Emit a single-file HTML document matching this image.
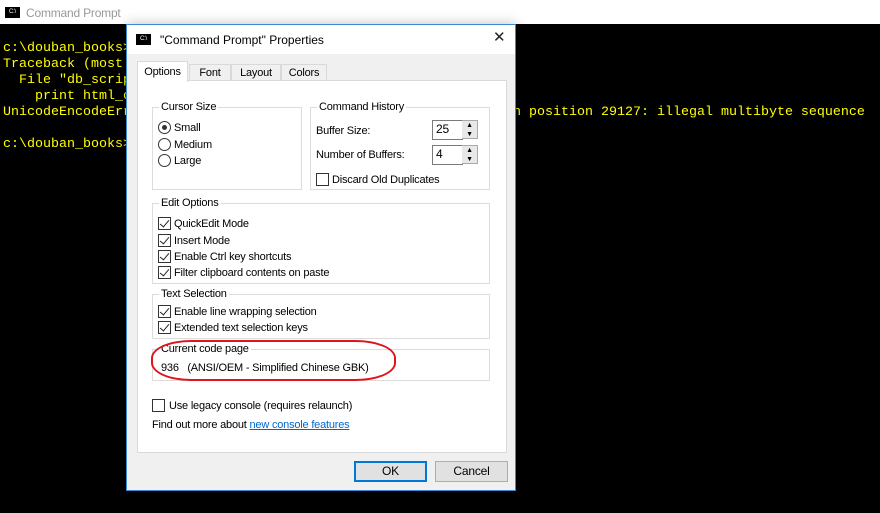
<!DOCTYPE html>
<html><head><style>
*{margin:0;padding:0;box-sizing:border-box}
body{width:880px;height:513px;overflow:hidden;background:#000;position:relative;font-family:"Liberation Sans",sans-serif;font-size:11px;letter-spacing:-0.2px;color:#000}
.a{position:absolute}
.con{font-family:"Liberation Mono",monospace;font-size:13.33px;color:#ff0;white-space:pre;line-height:16px;letter-spacing:0}
.grp{position:absolute;border:1px solid #dcdcdc}
.gl{position:absolute;background:#fff;padding:0 2px;top:-8px;left:6px;line-height:14px}
.cb{position:absolute;width:13px;height:13px;border:1px solid #333;background:#fff}
.cb.k::after{content:"";position:absolute;left:3px;top:0px;width:4px;height:8px;border:solid #222;border-width:0 1.5px 1.5px 0;transform:rotate(40deg)}
.rd{position:absolute;width:13px;height:13px;border:1px solid #333;border-radius:50%;background:#fff}
.t{position:absolute;line-height:14px;white-space:nowrap}
.tab{position:absolute;border:1px solid #d9d9d9;border-bottom:none;background:#f0f0f0;text-align:center;line-height:16px}
.btn{position:absolute;background:#e1e1e1;border:1px solid #adadad;text-align:center;line-height:18px;font-size:12px}
.spin{position:absolute;width:16px;height:19px;border:1px solid #aaa;border-left:none;background:#e8e8e8}
.inp{position:absolute;border:1px solid #7a7a7a;background:#fff;padding-left:3px;line-height:17px;font-size:12px}
</style></head><body>
<div class="a" style="left:0;top:0;width:880px;height:24px;background:#fff"></div>
<div class="a" style="left:5px;top:7px;width:15px;height:11px;background:#000;color:#fff;font-size:6px;line-height:11px;text-align:center">C:\</div>
<div class="t" style="left:26px;top:6px;font-size:12px;color:#999">Command Prompt</div>
<div class="con a" style="left:3px;top:41px">c:\douban_books&gt;
Traceback (most
  File "db_scrip
    print html_c
UnicodeEncodeErr

c:\douban_books&gt;</div>
<div class="con a" style="left:513px;top:105px">n position 29127: illegal multibyte sequence</div>

<div class="a" style="left:126px;top:24px;width:390px;height:467px;background:#f0f0f0;border:1px solid #3c8ad6;box-shadow:0 0 12px rgba(0,0,0,.25)">
<div class="a" style="left:0;top:0;width:388px;height:29px;background:#fff"></div>
<div class="a" style="left:9px;top:9px;width:15px;height:11px;background:#000;color:#fff;font-size:6px;line-height:11px;text-align:center">C:\</div>
<div class="t" style="left:33px;top:8px;font-size:12px;letter-spacing:0">"Command Prompt" Properties</div>
<div class="t" style="left:366px;top:6px;font-size:15px;color:#222">✕</div>

<div class="tab" style="left:62px;top:39px;width:42px;height:18px">Font</div>
<div class="tab" style="left:104px;top:39px;width:50px;height:18px">Layout</div>
<div class="tab" style="left:154px;top:39px;width:46px;height:18px">Colors</div>
<div class="a" style="left:10px;top:55px;width:370px;height:373px;background:#fff;border:1px solid #d9d9d9"></div>
<div class="tab" style="left:10px;top:36px;width:51px;height:21px;background:#fff;line-height:20px">Options</div>
</div>

<div class="grp" style="left:152px;top:107px;width:150px;height:83px"><span class="gl">Cursor Size</span></div>
<div class="rd" style="left:158px;top:121px"><div class="a" style="left:3px;top:3px;width:5px;height:5px;border-radius:50%;background:#333"></div></div>
<div class="t" style="left:174px;top:121px">Small</div>
<div class="rd" style="left:158px;top:138px"></div><div class="t" style="left:174px;top:138px">Medium</div>
<div class="rd" style="left:158px;top:154px"></div><div class="t" style="left:174px;top:154px">Large</div>

<div class="grp" style="left:310px;top:107px;width:180px;height:83px"><span class="gl">Command History</span></div>
<div class="t" style="left:316px;top:124px">Buffer Size:</div>
<div class="inp" style="left:432px;top:120px;width:31px;height:20px">25</div>
<div class="spin" style="left:462px;top:120px;font-size:7px;line-height:9px;text-align:center">▲<br>▼</div>
<div class="t" style="left:316px;top:148px">Number of Buffers:</div>
<div class="inp" style="left:432px;top:145px;width:31px;height:20px">4</div>
<div class="spin" style="left:462px;top:145px;font-size:7px;line-height:9px;text-align:center">▲<br>▼</div>
<div class="cb" style="left:316px;top:173px"></div><div class="t" style="left:332px;top:173px">Discard Old Duplicates</div>

<div class="grp" style="left:152px;top:203px;width:338px;height:81px"><span class="gl">Edit Options</span></div>
<div class="cb k" style="left:158px;top:217px"></div><div class="t" style="left:174px;top:217px">QuickEdit Mode</div>
<div class="cb k" style="left:158px;top:234px"></div><div class="t" style="left:174px;top:234px">Insert Mode</div>
<div class="cb k" style="left:158px;top:250px"></div><div class="t" style="left:174px;top:250px">Enable Ctrl key shortcuts</div>
<div class="cb k" style="left:158px;top:266px"></div><div class="t" style="left:174px;top:266px">Filter clipboard contents on paste</div>

<div class="grp" style="left:152px;top:294px;width:338px;height:45px"><span class="gl">Text Selection</span></div>
<div class="cb k" style="left:158px;top:305px"></div><div class="t" style="left:174px;top:305px">Enable line wrapping selection</div>
<div class="cb k" style="left:158px;top:321px"></div><div class="t" style="left:174px;top:321px">Extended text selection keys</div>

<div class="grp" style="left:152px;top:349px;width:338px;height:32px"><span class="gl">Current code page</span></div>
<div class="t" style="left:161px;top:361px">936 &nbsp; (ANSI/OEM - Simplified Chinese GBK)</div>
<div class="a" style="left:151px;top:340px;width:245px;height:41px;border:2.5px solid #e0141e;border-radius:40px/18px"></div>

<div class="cb" style="left:152px;top:399px"></div><div class="t" style="left:169px;top:399px">Use legacy console (requires relaunch)</div>
<div class="t" style="left:152px;top:418px">Find out more about <span style="color:#0066cc;text-decoration:underline">new console features</span></div>

<div class="btn" style="left:354px;top:461px;width:73px;height:21px;border:2px solid #0078d7;line-height:17px">OK</div>
<div class="btn" style="left:435px;top:461px;width:73px;height:21px">Cancel</div>
</body></html>
